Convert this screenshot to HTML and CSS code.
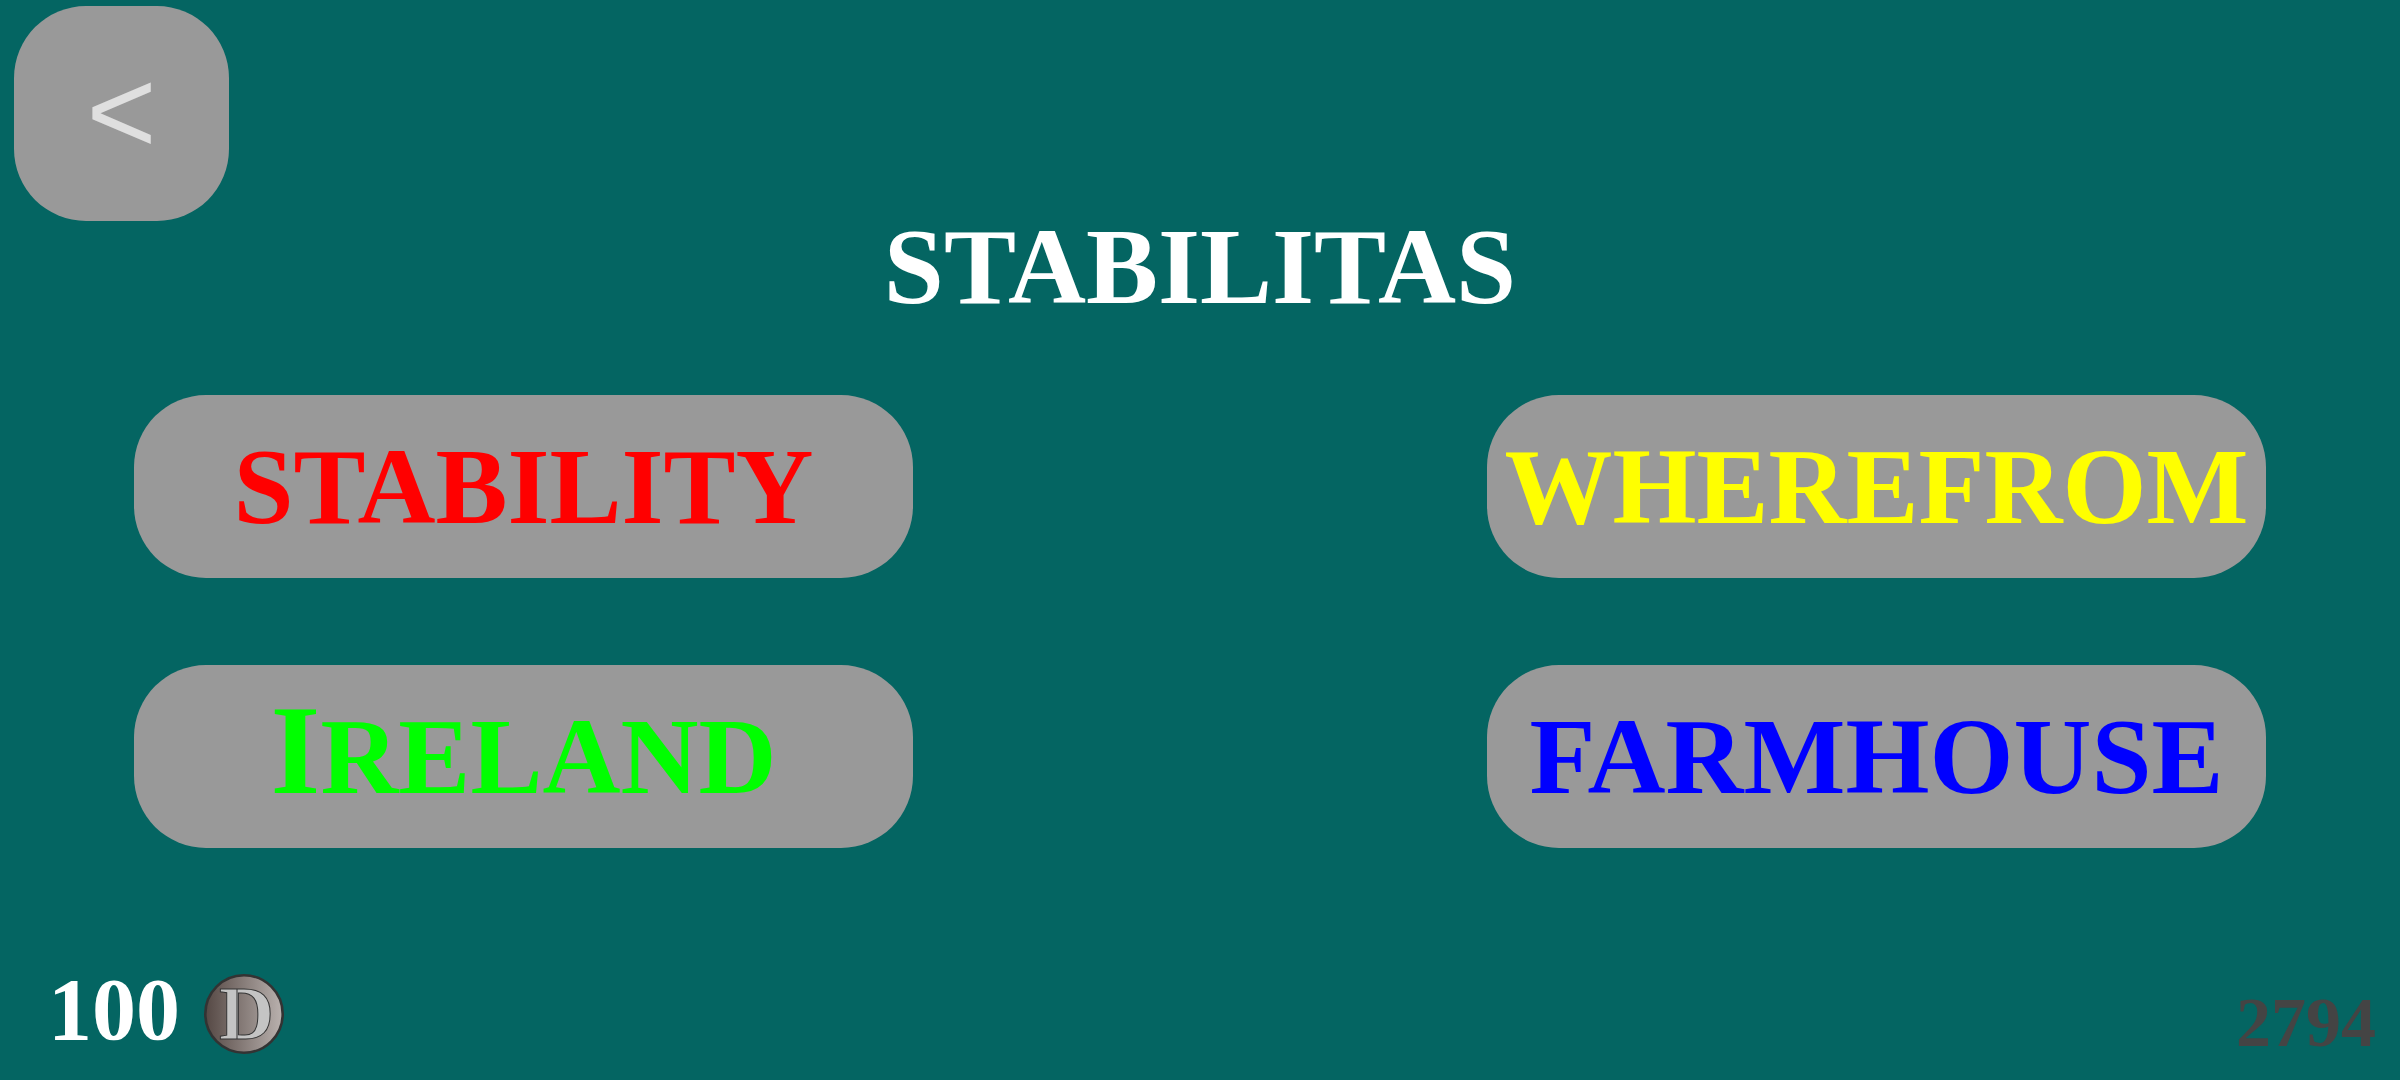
FILE: index.html
```html
<!DOCTYPE html>
<html lang="en">
<head>
  <meta charset="utf-8">
  <meta name="viewport" content="width=device-width, initial-scale=1">
  <title>Stabilitas</title>
  <link rel="stylesheet" href="styles.css">
</head>
<body class="quiz">
  <header class="top">
    <button class="back" type="button">&lt;</button>
  </header>
  <main class="question">
    <h1 class="word">STABILITAS</h1>
    <div class="answers">
      <button class="answer answer-red" type="button">STABILITY</button>
      <button class="answer answer-yellow" type="button">WHEREFROM</button>
      <button class="answer answer-green" type="button"><span class="initial">I</span>RELAND</button>
      <button class="answer answer-blue" type="button">FARMHOUSE</button>
    </div>
  </main>
  <footer class="status">
    <div class="balance">
      <span class="amount">100</span>
      <svg class="coin" viewBox="0 0 80 80" aria-hidden="true">
        <defs>
          <linearGradient id="metal">
            <stop offset="0" stop-color="#554844"/>
            <stop offset="1" stop-color="#bab2af"/>
          </linearGradient>
        </defs>
        <circle cx="40" cy="40" r="38.7" fill="url(#metal)" stroke="#333" stroke-width="2.6"/>
        <text class="coin-letter" x="15" y="65">D</text>
        <path d="M33 15V65" fill="none" stroke="#333"/>
      </svg>
    </div>
    <span class="remaining">2794</span>
  </footer>
</body>
</html>
```
FILE: styles.css
```css
* {
  box-sizing: border-box;
}

.quiz {
  display: flex;
  flex-direction: column;
  min-height: 100vh;
  margin: 0;
  background: #046562;
  color: #fff;
  font-family: "Liberation Serif", "Times New Roman", serif;
  font-weight: 700;
}

.top {
  display: flex;
  padding: 6px 14px 0;
}

.back {
  width: 215px;
  height: 215px;
  padding: 0 0 6px;
  border: 0;
  border-radius: 72px;
  background: #999;
  color: #dfdfdf;
  font: 400 120px "Liberation Sans", Arial, sans-serif;
}

.question {
  flex: 1;
}

.word {
  margin: 0 0 82px;
  font-size: 108px;
  line-height: 92px;
  text-align: center;
}

.answers {
  display: grid;
  grid-template-columns: 1fr 1fr;
  gap: 87px 574px;
  padding: 0 134px;
}

.answer {
  height: 183px;
  padding: 0;
  border: 0;
  border-radius: 72px;
  background: #999;
  font: 700 108px "Liberation Serif", "Times New Roman", serif;
}

.answer-red {
  color: #f00;
}

.answer-yellow {
  color: #ff0;
}

.answer-green {
  color: #0f0;
}

.answer-blue {
  color: #00f;
}

.initial {
  font-size: 128px;
  line-height: 108px;
}

.status {
  display: flex;
  align-items: flex-end;
  justify-content: space-between;
  padding: 0 24px 26px 48px;
}

.balance {
  display: flex;
  align-items: flex-end;
  gap: 24px;
}

.amount {
  font-size: 88px;
  line-height: 88px;
}

.coin {
  width: 80px;
  height: 80px;
  overflow: visible;
}

.coin-letter {
  fill: #c4c4c4;
  stroke: #333;
  font-size: 76px;
  font-weight: 700;
}

.remaining {
  color: #444;
  font-size: 70px;
  line-height: 62px;
}

@media (max-width: 2200px) {
  .answers {
    column-gap: 64px;
    padding: 0 64px;
  }
}

@media (max-width: 1700px) {
  .answers {
    grid-template-columns: 1fr;
  }
}
```
